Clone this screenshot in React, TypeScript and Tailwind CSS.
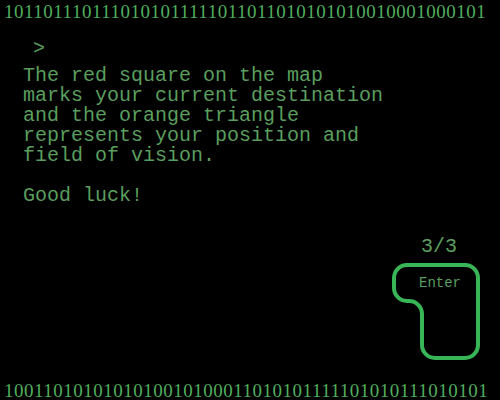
import React from "react";

const TOP_BITS = "1011011101110101011111011011010101010010001000101";
const BOTTOM_BITS = "1001101010101010010100011010101111101010111010101";

const message = `The red square on the map
marks your current destination
and the orange triangle
represents your position and
field of vision.

Good luck!`;

function BitRow({ bits, className }: { bits: string; className?: string }) {
  return (
    <div
      className={
        "pl-[4px] text-[19px] leading-[18px] tracking-[0.5px] text-[#4fae5c] whitespace-nowrap " +
        (className ?? "")
      }
      style={{ fontFamily: '"Liberation Serif", "Times New Roman", serif' }}
    >
      {bits}
    </div>
  );
}

function EnterButton() {
  return (
    <button className="relative block w-[92px] h-[101px] cursor-pointer">
      <svg
        className="absolute inset-0"
        width="92"
        height="101"
        viewBox="0 0 92 101"
        fill="none"
      >
        <path
          d="M17 4 H75 A13 13 0 0 1 88 17 V84 A13 13 0 0 1 75 97 H45 A13 13 0 0 1 32 84 V53 A13 13 0 0 0 19 40 H17 A13 13 0 0 1 4 27 V17 A13 13 0 0 1 17 4 Z"
          stroke="#38b556"
          strokeWidth="4"
        />
      </svg>
      <span className="absolute left-[29px] top-[15px] text-[14px] leading-[14px] text-[#5a9e5e]">
        Enter
      </span>
    </button>
  );
}

export default function App() {
  return (
    <div
      className="w-[500px] h-[400px] bg-black flex flex-col overflow-hidden"
      style={{ fontFamily: '"Liberation Mono", "Courier New", monospace' }}
    >
      <BitRow bits={TOP_BITS} className="pt-[3px]" />

      <div className="ml-[33px] mt-[18px] text-[20px] leading-[20px] text-[#5a9e5e]">&gt;</div>

      <p className="ml-[23px] mt-[7px] whitespace-pre text-[20px] leading-[20px] text-[#5a9e5e]">
        {message}
      </p>

      <div className="mt-[31px] pr-[18px] flex justify-end">
        <div className="flex flex-col items-center">
          <div className="pl-[6px] text-[20px] leading-[20px] text-[#5a9e5e]">3/3</div>
          <div className="mt-[4px] flex">
            <EnterButton />
          </div>
        </div>
      </div>

      <BitRow bits={BOTTOM_BITS} className="mt-[20px]" />
    </div>
  );
}
